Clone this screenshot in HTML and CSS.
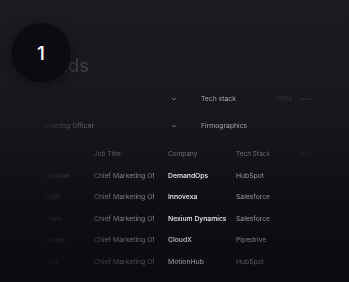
FILE: index.html
```html
<!DOCTYPE html>
<html lang="en">
  <head>
    <meta charset="UTF-8" />
    <meta name="viewport" content="width=device-width, initial-scale=1.0" />
    <title>Leads</title>
    <link rel="stylesheet" href="styles.css">
  </head>
  <body>
    <div class="screen">
      <div class="content">
        <h1 class="title">Leads</h1>

        <div class="filters">
          <div class="select">
            <span class="select-value"></span>
            <svg class="chevron" viewBox="0 0 6 4"><polyline points="1,1 3,3 5,1" /></svg>
          </div>
          <div class="filter-row">
            <span class="filter-label">Tech stack</span>
            <span class="filter-value">CRM</span>
            <span class="filter-bar"></span>
          </div>
          <div class="select">
            <span class="select-value">Chief Marketing Officer</span>
            <svg class="chevron" viewBox="0 0 6 4"><polyline points="1,1 3,3 5,1" /></svg>
          </div>
          <div class="filter-row">
            <span class="filter-label">Firmographics</span>
          </div>
        </div>

        <div class="table">
          <div class="row head">
            <span>Name</span>
            <span>Job Title</span>
            <span>Company</span>
            <span>Tech Stack</span>
            <span>Intel</span>
          </div>
          <div class="row">
            <span class="name">Emma Davison</span>
            <span class="job">Chief Marketing Officer</span>
            <span class="company">DemandOps</span>
            <span class="tech">HubSpot</span>
            <span></span>
          </div>
          <div class="row">
            <span class="name">Laura Smith</span>
            <span class="job">Chief Marketing Officer</span>
            <span class="company">Innovexa</span>
            <span class="tech">Salesforce</span>
            <span></span>
          </div>
          <div class="row">
            <span class="name">Mark Brown</span>
            <span class="job">Chief Marketing Officer</span>
            <span class="company">Nexium Dynamics</span>
            <span class="tech">Salesforce</span>
            <span></span>
          </div>
          <div class="row">
            <span class="name">Kate Williams</span>
            <span class="job">Chief Marketing Officer</span>
            <span class="company">CloudX</span>
            <span class="tech">Pipedrive</span>
            <span></span>
          </div>
          <div class="row">
            <span class="name">Ryan Lewis</span>
            <span class="job">Chief Marketing Officer</span>
            <span class="company">MotionHub</span>
            <span class="tech">HubSpot</span>
            <span></span>
          </div>
        </div>
      </div>

      <div class="badge">1</div>
    </div>
  </body>
</html>
```

FILE: styles.css
```css
body {
  margin: 0;
  font-family: Inter, "Noto Sans", sans-serif;
  background: #0d0c11;
}
.screen {
  position: relative;
  width: 349px;
  height: 282px;
  overflow: hidden;
  background: linear-gradient(180deg, #1b1b20 0%, #17171c 40%, #0f0e13 72%, #0b0a0f 100%);
}
.content {
  padding-top: 55px;
  -webkit-mask-image: linear-gradient(90deg, transparent 0px, transparent 40px, rgba(0, 0, 0, 0.35) 62px, rgba(0, 0, 0, 0.8) 110px, #000 165px, #000 255px, rgba(0, 0, 0, 0.3) 305px, transparent 330px);
  mask-image: linear-gradient(90deg, transparent 0px, transparent 40px, rgba(0, 0, 0, 0.35) 62px, rgba(0, 0, 0, 0.8) 110px, #000 165px, #000 255px, rgba(0, 0, 0, 0.3) 305px, transparent 330px);
}
.title {
  margin: 0 0 8px 37px;
  height: 22px;
  line-height: 22px;
  font-size: 18px;
  font-weight: 500;
  color: #5a5a61;
}
.filters {
  display: grid;
  grid-template-columns: 181px 148px;
  column-gap: 20px;
  grid-auto-rows: 27px;
}
.select {
  display: flex;
  align-items: center;
  justify-content: space-between;
  padding: 0 4px 0 19px;
}
.select-value {
  font-size: 6.8px;
  color: #9a9aa0;
}
.chevron {
  width: 6px;
  height: 4px;
  fill: none;
  stroke: #75757b;
  stroke-width: 0.9;
}
.filter-row {
  display: flex;
  align-items: center;
}
.filter-label {
  width: 76px;
  font-size: 6.8px;
  color: #a4a4aa;
}
.filter-value {
  width: 24px;
  font-size: 6.5px;
  color: #4a4a50;
}
.filter-bar {
  width: 12px;
  height: 2px;
  border-radius: 1px;
  background: #3c4a47;
}
.table {
  margin-top: 4px;
  padding-left: 10px;
}
.row {
  display: grid;
  grid-template-columns: 84px 74px 68px 63px 40px;
  height: 21.5px;
  align-items: center;
  font-size: 6.8px;
}
.row span {
  white-space: nowrap;
  overflow: hidden;
}
.head {
  color: #6e6e75;
  font-size: 6.5px;
}
.head span:last-child {
  color: #3a3a40;
}
.name {
  color: #8a8a90;
  padding-left: 12px;
}
.job {
  width: 60px;
  color: #8e8e95;
}
.company {
  color: #ececf0;
  font-weight: 500;
}
.tech {
  color: #9a9aa0;
}
.row:nth-child(5) span {
  opacity: 0.8;
}
.row:nth-child(6) span {
  opacity: 0.55;
}
.badge {
  position: absolute;
  left: 10px;
  top: 22px;
  width: 62px;
  height: 62px;
  border-radius: 50%;
  background: #0c0b11;
  border: 1px solid rgba(255, 255, 255, 0.06);
  box-sizing: border-box;
  box-shadow: 0 2px 10px rgba(0, 0, 0, 0.35);
  display: flex;
  align-items: center;
  justify-content: center;
  color: #ffffff;
  font-size: 19px;
  font-weight: 500;
}
```
